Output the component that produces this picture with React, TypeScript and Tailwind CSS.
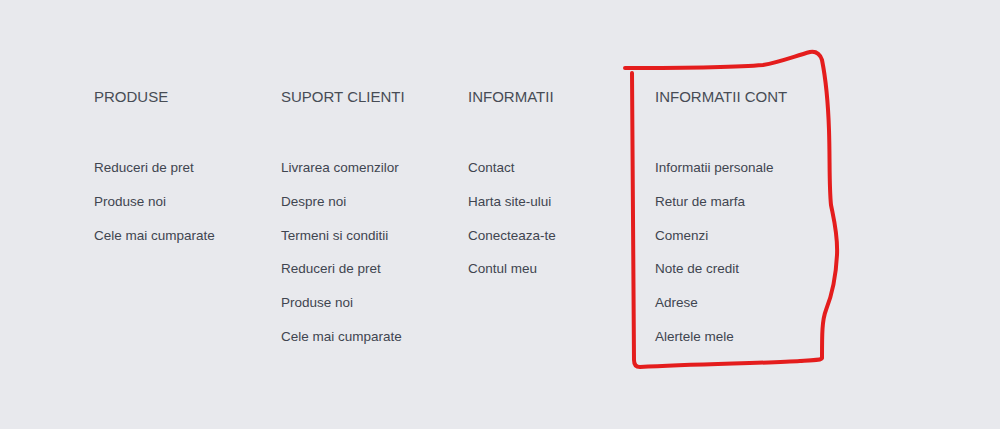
import React from "react";

const columns: { title: string; links: string[] }[] = [
  { title: "PRODUSE", links: ["Reduceri de pret", "Produse noi", "Cele mai cumparate"] },
  {
    title: "SUPORT CLIENTI",
    links: ["Livrarea comenzilor", "Despre noi", "Termeni si conditii", "Reduceri de pret", "Produse noi", "Cele mai cumparate"],
  },
  { title: "INFORMATII", links: ["Contact", "Harta site-ului", "Conecteaza-te", "Contul meu"] },
  {
    title: "INFORMATII CONT",
    links: ["Informatii personale", "Retur de marfa", "Comenzi", "Note de credit", "Adrese", "Alertele mele"],
  },
];

export default function App() {
  return (
    <div
      className="relative w-[1000px] h-[429px] bg-[#e8e9ed] overflow-hidden"
      style={{ fontFamily: '"Liberation Sans", Arial, sans-serif' }}
    >
      <div className="flex pl-[94px] pt-[87px]">
        {columns.map((col) => (
          <div key={col.title} className="w-[187px] flex flex-col">
            <h3 className="text-[15px] leading-[20px] text-[#474c55] font-normal">{col.title}</h3>
            <ul className="mt-[44px] flex flex-col">
              {col.links.map((l) => (
                <li key={l} className="text-[13.5px] leading-[33.8px] h-[33.8px] text-[#3f4550]">
                  {l}
                </li>
              ))}
            </ul>
          </div>
        ))}
      </div>
      <svg className="absolute left-0 top-0 pointer-events-none" width="1000" height="429">
        <path
          d="M625 68 C680 68 730 68 763 65 C780 62 795 56 810 52 C816 51 820 54 822 60 C826 80 828 100 829 130 C830 160 829 185 831 205 C834 220 838 235 837 255 C836 275 832 295 826 310 C822 320 822 335 822 358 C821 360 818 360 800 361 C770 363 700 364 640 367 C636 367 634 365 634 360 C633 300 632 200 632 73"
          fill="none"
          stroke="#e41d1d"
          strokeWidth="4"
          strokeLinecap="round"
          strokeLinejoin="round"
        />
      </svg>
    </div>
  );
}
